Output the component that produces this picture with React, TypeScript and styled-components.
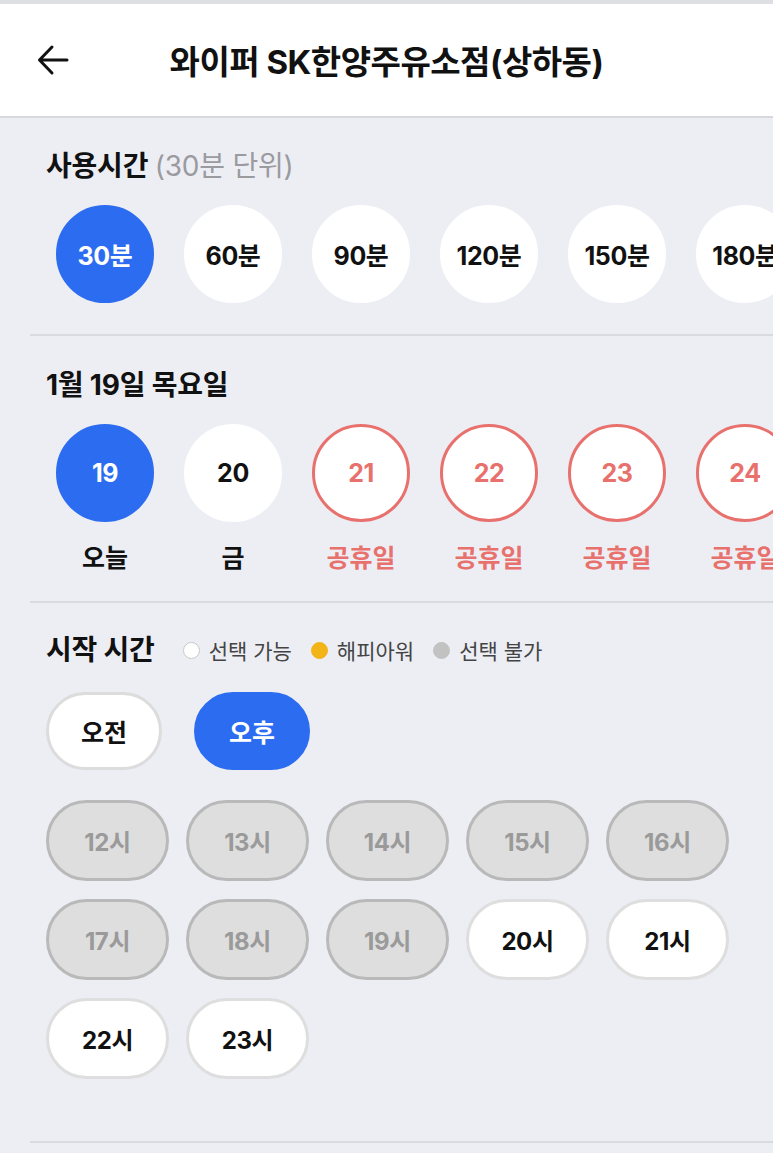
import React from "react";
import styled, { createGlobalStyle } from "styled-components";

const GlobalStyle = createGlobalStyle`
	html, body {
		margin: 0;
		padding: 0;
		background: #eceef4;
	}
	body {
		font-family: Inter, "Noto Sans CJK KR", "Noto Sans", sans-serif;
		color: #111;
	}
`;

const durations = ["30분", "60분", "90분", "120분", "150분", "180분"];

const days = [
	{ num: "19", label: "오늘", kind: "selected" },
	{ num: "20", label: "금", kind: "normal" },
	{ num: "21", label: "공휴일", kind: "holiday" },
	{ num: "22", label: "공휴일", kind: "holiday" },
	{ num: "23", label: "공휴일", kind: "holiday" },
	{ num: "24", label: "공휴일", kind: "holiday" },
];

const hours = [12, 13, 14, 15, 16, 17, 18, 19, 20, 21, 22, 23];
const firstAvailable = 20;

type Kind = "selected" | "normal" | "holiday";

const App = () => {
	return (
		<Page>
			<GlobalStyle />
			<TopStrip />
			<Header>
				<BackButton aria-label="뒤로">
					<svg width="34" height="34" viewBox="0 0 34 34" fill="none">
						<path
							d="M31 17H4M16 4L3.5 17L16 30"
							stroke="#111"
							strokeWidth="3"
							strokeLinecap="round"
							strokeLinejoin="round"
						/>
					</svg>
				</BackButton>
				<HeaderTitle>와이퍼 SK한양주유소점(상하동)</HeaderTitle>
				<span />
			</Header>

			<Section $top={30} $bottom={31}>
				<SectionTitle>
					사용시간 <Hint>(30분 단위)</Hint>
				</SectionTitle>
				<CircleRow>
					{durations.map((d, i) => (
						<Circle key={d} $kind={i === 0 ? "selected" : "normal"}>
							{d}
						</Circle>
					))}
				</CircleRow>
			</Section>

			<Section $top={31} $bottom={28}>
				<SectionTitle>1월 19일 목요일</SectionTitle>
				<CircleRow>
					{days.map((d) => (
						<DayItem key={d.num}>
							<Circle $kind={d.kind as Kind}>{d.num}</Circle>
							<DayLabel $holiday={d.kind === "holiday"}>{d.label}</DayLabel>
						</DayItem>
					))}
				</CircleRow>
			</Section>

			<Section $top={29} $bottom={62}>
				<TitleLine>
					<SectionTitle>시작 시간</SectionTitle>
					<Legend>
						<LegendItem>
							<Dot $color="#ffffff" $border="#c8c8c8" />
							선택 가능
						</LegendItem>
						<LegendItem>
							<Dot $color="#f2b417" $border="#f2b417" />
							해피아워
						</LegendItem>
						<LegendItem>
							<Dot $color="#c2c2c2" $border="#c2c2c2" />
							선택 불가
						</LegendItem>
					</Legend>
				</TitleLine>
				<PeriodRow>
					<PeriodButton>오전</PeriodButton>
					<PeriodButton $active>오후</PeriodButton>
				</PeriodRow>
				<HourGrid>
					{hours.map((h) => (
						<HourPill key={h} $disabled={h < firstAvailable}>
							{h}시
						</HourPill>
					))}
				</HourGrid>
			</Section>
		</Page>
	);
};

const Page = styled.div`
	width: 773px;
	min-height: 1153px;
	background: #eceef4;
	overflow: hidden;
`;

const TopStrip = styled.div`
	height: 4px;
	background: #dedfe2;
`;

const Header = styled.header`
	height: 112px;
	background: #ffffff;
	border-bottom: 2px solid #d7d8dc;
	display: grid;
	grid-template-columns: 110px 1fr 110px;
	align-items: center;
`;

const BackButton = styled.button`
	border: none;
	background: none;
	padding: 0 0 0 36px;
	display: flex;
	align-items: center;
	justify-content: flex-start;
	cursor: pointer;
`;

const HeaderTitle = styled.h1`
	margin: 0;
	text-align: center;
	font-size: 33px;
	font-weight: 700;
	letter-spacing: -0.5px;
	color: #111;
	white-space: nowrap;
`;

const Section = styled.section<{ $top: number; $bottom: number }>`
	margin-left: 30px;
	padding: ${(p) => p.$top}px 0 ${(p) => p.$bottom}px 16px;
	border-bottom: 2px solid #dadbe0;
`;

const SectionTitle = styled.h2`
	margin: 0;
	font-size: 28px;
	line-height: 36px;
	font-weight: 700;
	color: #111;
	letter-spacing: -0.2px;
	white-space: nowrap;
`;

const Hint = styled.span`
	font-weight: 400;
	color: #9a9a9f;
`;

const CircleRow = styled.div`
	display: flex;
	gap: 30px;
	margin-top: 21px;
	padding-left: 10px;
	white-space: nowrap;
`;

const circleColors: Record<Kind, { bg: string; border: string; text: string }> = {
	selected: { bg: "#2b6cf0", border: "#2b6cf0", text: "#ffffff" },
	normal: { bg: "#ffffff", border: "#ffffff", text: "#111111" },
	holiday: { bg: "#ffffff", border: "#e8716e", text: "#e8716e" },
};

const Circle = styled.div<{ $kind: Kind }>`
	flex: 0 0 auto;
	width: 98px;
	height: 98px;
	box-sizing: border-box;
	border-radius: 50%;
	border: 3px solid ${(p) => circleColors[p.$kind].border};
	background: ${(p) => circleColors[p.$kind].bg};
	color: ${(p) => circleColors[p.$kind].text};
	display: flex;
	align-items: center;
	justify-content: center;
	font-size: 25px;
	font-weight: 700;
	letter-spacing: -0.4px;
`;

const DayItem = styled.div`
	display: flex;
	flex-direction: column;
	align-items: center;
	gap: 21px;
`;

const DayLabel = styled.span<{ $holiday: boolean }>`
	font-size: 25px;
	line-height: 30px;
	font-weight: 700;
	color: ${(p) => (p.$holiday ? "#e8716e" : "#111")};
`;

const TitleLine = styled.div`
	display: flex;
	align-items: center;
	gap: 28px;
`;

const Legend = styled.div`
	display: flex;
	align-items: center;
	gap: 19px;
`;

const LegendItem = styled.span`
	display: flex;
	align-items: center;
	gap: 9px;
	font-size: 21px;
	color: #444;
	white-space: nowrap;
`;

const Dot = styled.i<{ $color: string; $border: string }>`
	display: inline-block;
	width: 17px;
	height: 17px;
	box-sizing: border-box;
	border-radius: 50%;
	background: ${(p) => p.$color};
	border: 1.5px solid ${(p) => p.$border};
`;

const PeriodRow = styled.div`
	display: flex;
	gap: 32px;
	margin-top: 24px;
`;

const PeriodButton = styled.button<{ $active?: boolean }>`
	width: 116px;
	height: 78px;
	border-radius: 39px;
	border: 3px solid ${(p) => (p.$active ? "#2b6cf0" : "#dcdcdc")};
	background: ${(p) => (p.$active ? "#2b6cf0" : "#ffffff")};
	color: ${(p) => (p.$active ? "#ffffff" : "#111")};
	font-family: inherit;
	font-size: 25px;
	font-weight: 700;
	padding: 0;
`;

const HourGrid = styled.div`
	display: grid;
	grid-template-columns: repeat(5, 123px);
	column-gap: 17px;
	row-gap: 18px;
	margin-top: 30px;
`;

const HourPill = styled.div<{ $disabled: boolean }>`
	height: 81px;
	box-sizing: border-box;
	border-radius: 41px;
	border: 3px solid ${(p) => (p.$disabled ? "#b9b9b9" : "#dedede")};
	background: ${(p) => (p.$disabled ? "#dedede" : "#ffffff")};
	color: ${(p) => (p.$disabled ? "#9a9a9a" : "#111")};
	display: flex;
	align-items: center;
	justify-content: center;
	font-size: 24px;
	font-weight: 700;
	letter-spacing: -0.4px;
`;

export default App;
